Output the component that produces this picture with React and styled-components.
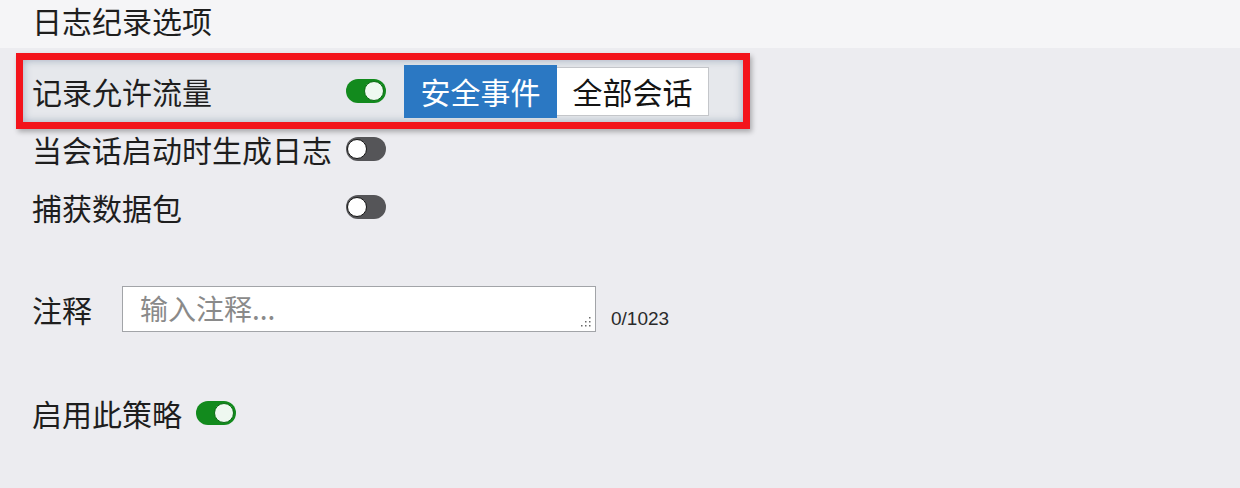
import React from 'react';
import styled, { createGlobalStyle } from 'styled-components';

const GlobalStyle = createGlobalStyle`
  html, body {
    margin: 0;
    padding: 0;
    background: #ececf0;
  }
  body {
    font-family: "Noto Sans CJK SC", "Noto Sans", sans-serif;
    color: #1e1e1e;
  }
`;

const Page = styled.div`
  width: 1240px;
  height: 488px;
  overflow: hidden;
  background: #ececf0;
`;

const Header = styled.div`
  height: 48px;
  padding-left: 32px;
  background: #f5f5f7;
  font-size: 30px;
  line-height: 40px;
`;

const Highlight = styled.div`
  box-sizing: border-box;
  margin: 5px 0 0 16px;
  width: 734px;
  height: 76px;
  border: 7px solid #f3131b;
  background: #e6e8ec;
  box-shadow: 2px 3px 5px rgba(0, 0, 0, 0.28), inset 0 0 8px rgba(70, 95, 130, 0.45);
  display: flex;
  align-items: center;
  padding-left: 9px;
`;

const Row = styled.div`
  display: flex;
  align-items: center;
  height: ${p => p.$h || 40}px;
  margin-top: ${p => p.$top || 0}px;
  padding-left: ${p => (p.$inBox ? 0 : 32)}px;
`;

const Label = styled.div`
  width: ${p => p.$w}px;
  flex-shrink: 0;
  font-size: 30px;
  line-height: 40px;
  white-space: nowrap;
`;

const Track = styled.div`
  position: relative;
  box-sizing: border-box;
  width: 40px;
  height: 24px;
  border-radius: 12px;
  flex-shrink: 0;
  background: ${p => (p.$on ? '#128a1d' : '#555558')};
`;

const Thumb = styled.div`
  position: absolute;
  top: 2px;
  ${p => (p.$on ? 'right: 2px;' : 'left: 1px;')}
  box-sizing: border-box;
  width: 20px;
  height: 20px;
  border-radius: 50%;
  background: ${p => (p.$on ? '#eef8f0' : '#ffffff')};
  border: ${p => (p.$on ? '1px solid #0c6a14' : '1.5px solid #141414')};
`;

const Segmented = styled.div`
  display: flex;
  align-items: center;
  margin-left: 18px;
`;

const Segment = styled.div`
  box-sizing: border-box;
  width: ${p => p.$w}px;
  height: ${p => (p.$active ? 53 : 49)}px;
  display: flex;
  align-items: center;
  justify-content: center;
  font-size: 30px;
  background: ${p => (p.$active ? '#2b78c3' : '#ffffff')};
  color: ${p => (p.$active ? '#ffffff' : '#141414')};
  border: ${p => (p.$active ? 'none' : '1px solid #c4c6ca')};
  border-left: none;
`;

const NoteWrap = styled.div`
  position: relative;
  width: 474px;
  height: 46px;
  flex-shrink: 0;
`;

const NoteInput = styled.textarea`
  box-sizing: border-box;
  width: 100%;
  height: 100%;
  margin: 0;
  padding: 1px 17px 0;
  border: 1px solid #a2a4a8;
  background: #ffffff;
  resize: none;
  font-family: "Noto Sans CJK SC", "Noto Sans", sans-serif;
  font-size: 28px;
  line-height: 40px;
  color: #222;
  outline: none;
  overflow: hidden;
  &::placeholder {
    color: #8a8a8a;
  }
`;

const Grip = styled.svg`
  position: absolute;
  right: 5px;
  bottom: 5px;
`;

const Counter = styled.div`
  font-family: "Liberation Sans", Arial, sans-serif;
  font-size: 19px;
  color: #2a2a2a;
  margin-left: 15px;
  align-self: flex-end;
  padding-bottom: 2px;
`;

function Toggle({ on }) {
  return (
    <Track $on={on}>
      <Thumb $on={on} />
    </Track>
  );
}

export default function App() {
  return (
    <Page>
      <GlobalStyle />
      <Header>日志纪录选项</Header>
      <Highlight>
        <Row $inBox>
          <Label $w={314}>记录允许流量</Label>
          <Toggle on />
          <Segmented>
            <Segment $active $w={153}>安全事件</Segment>
            <Segment $w={152}>全部会话</Segment>
          </Segmented>
        </Row>
      </Highlight>
      <Row>
        <Label $w={314}>当会话启动时生成日志</Label>
        <Toggle />
      </Row>
      <Row $top={18}>
        <Label $w={314}>捕获数据包</Label>
        <Toggle />
      </Row>
      <Row $top={59} $h={46}>
        <Label $w={90}>注释</Label>
        <NoteWrap>
          <NoteInput placeholder="输入注释..." />
          <Grip width="10" height="10" viewBox="0 0 10 10">
            <g fill="#6a6a6a">
              <rect x="8" y="0" width="1.5" height="1.5" />
              <rect x="8" y="4" width="1.5" height="1.5" />
              <rect x="4" y="4" width="1.5" height="1.5" />
              <rect x="8" y="8" width="1.5" height="1.5" />
              <rect x="4" y="8" width="1.5" height="1.5" />
              <rect x="0" y="8" width="1.5" height="1.5" />
            </g>
          </Grip>
        </NoteWrap>
        <Counter>0/1023</Counter>
      </Row>
      <Row $top={61}>
        <Label $w={164}>启用此策略</Label>
        <Toggle on />
      </Row>
    </Page>
  );
}
